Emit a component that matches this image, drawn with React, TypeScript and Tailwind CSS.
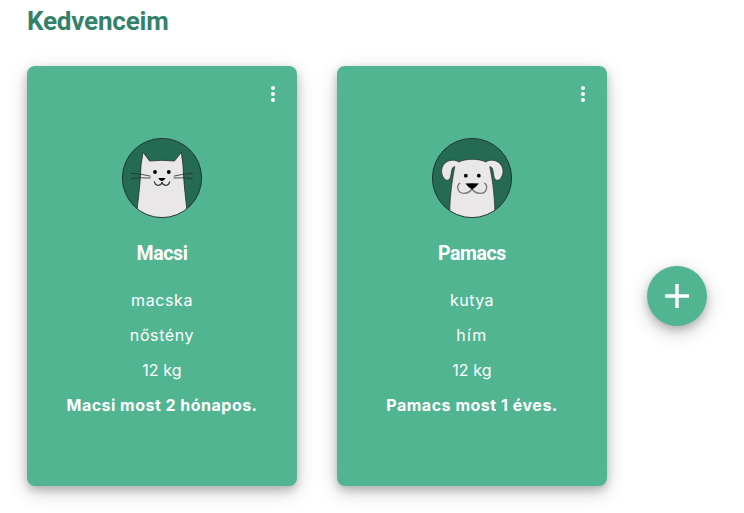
import React from "react";

function CatAvatar() {
  return (
    <svg viewBox="0 0 80 80" className="size-20">
      <defs>
        <clipPath id="cat-clip">
          <circle cx="40" cy="40" r="39.6" />
        </clipPath>
      </defs>
      <circle cx="40" cy="40" r="39.6" fill="#256b53" />
      <g clipPath="url(#cat-clip)" fill="none" stroke="#222b28" strokeWidth="0.8">
        <path
          d="M14 82 C16 62 18.5 45 19 27 L21 14.3 L27.6 23 Q40 21.6 52.5 23 L59.3 14.3 L61 27 C61.5 45 64 62 66 82 Z"
          fill="#e9e7e8"
        />
        <path d="M9 35.4 Q19 35.7 28.7 38.2 M9 40.6 Q19 39.3 28.7 40 M70.8 35.4 Q61 35.7 51.7 38.2 M70.8 40.6 Q61 39.3 51.7 40" />
        <path d="M32.4 43.4 C33 48.5 39 48.5 40 44.2 C41 48.5 47 48.5 47.6 43.4" strokeWidth="1.1" />
      </g>
      <circle cx="33" cy="34" r="1.9" fill="#000" />
      <circle cx="46.8" cy="34" r="1.9" fill="#000" />
      <path d="M36.3 40 H43.5 Q42.5 42.5 39.9 43.3 Q37.3 42.5 36.3 40Z" fill="#000" />
      <circle cx="40" cy="40" r="39.6" fill="none" stroke="#202b27" strokeWidth="0.9" />
    </svg>
  );
}

function DogAvatar() {
  return (
    <svg viewBox="0 0 80 80" className="size-20">
      <defs>
        <clipPath id="dog-clip">
          <circle cx="40" cy="40" r="39.6" />
        </clipPath>
      </defs>
      <circle cx="40" cy="40" r="39.6" fill="#256b53" />
      <g clipPath="url(#dog-clip)" fill="#e9e7e8" stroke="#222b28" strokeWidth="0.7">
        <path d="M17.6 82 C17.5 62 19.5 45 22.8 28.6 C18.8 29.2 20 35 18.2 40 C16.5 44 12 42.5 10.2 37 C7.6 29.5 13 22.2 20.5 22.2 C23 22.2 25 22.8 26.8 24 C34 20.4 47 20.4 53.8 24 C55.6 22.8 57.6 22.2 60 22.2 C67.4 22.2 73 29.5 70.4 37 C68.6 42.5 64.2 44 62.4 40 C60.7 35 61.8 29.2 57.8 28.6 C61.2 45 63 62 63 82 Z" />
      </g>
      <path
        d="M28.2 45.2 C24.3 47 24.8 55.4 32 55.4 Q37 55.2 40 51 Q43 55.2 48.2 55.4 C55.4 55.4 56.2 47 52.2 45.2"
        fill="none"
        stroke="#777777"
        strokeWidth="1.3"
      />
      <circle cx="33.8" cy="37.7" r="1.9" fill="#000" />
      <circle cx="46.8" cy="37.7" r="1.9" fill="#000" />
      <path d="M33.4 45.6 Q40 44.9 46.9 45.6 Q44 49.4 40.1 51.4 Q36 49.4 33.4 45.6Z" fill="#000" />
      <circle cx="40" cy="40" r="39.6" fill="none" stroke="#202b27" strokeWidth="0.9" />
    </svg>
  );
}

interface Line {
  text: string;
  className: string;
}

interface PetCardProps {
  name: string;
  avatar: React.ReactNode;
  lines: Line[];
}

function PetCard({ name, avatar, lines }: PetCardProps) {
  return (
    <article className="flex h-[420px] w-[270px] flex-col items-center rounded-lg bg-[#51b592] text-white shadow-[0_4px_8px_0_rgba(0,0,0,0.2),0_6px_20px_0_rgba(0,0,0,0.19)]">
      <div className="flex h-[72px] w-full justify-end pt-4 pr-3">
        <button aria-label="Menü" className="size-6">
          <svg viewBox="0 0 24 24" className="size-6" fill="currentColor">
            <circle cx="12" cy="6" r="2" />
            <circle cx="12" cy="12" r="2" />
            <circle cx="12" cy="18" r="2" />
          </svg>
        </button>
      </div>
      {avatar}
      <h2 className="mt-[22px] mb-[15px] font-['Roboto',sans-serif] text-[19.5px] leading-[28px] font-bold tracking-[-0.4px]">{name}</h2>
      {lines.map((line) => (
        <p key={line.text} className={`h-[35px] font-['Inter',sans-serif] text-[16px] leading-[35px] whitespace-nowrap ${line.className}`}>
          {line.text}
        </p>
      ))}
    </article>
  );
}

export default function App() {
  return (
    <main className="h-[513px] overflow-hidden bg-white pl-[27px]">
      <h1 className="h-[66px] pt-[3px] font-['Roboto',sans-serif] text-[26px] leading-[36px] font-bold tracking-[-0.2px] text-[#34816a]">Kedvenceim</h1>
      <div className="flex items-center gap-10">
        <PetCard
          name="Macsi"
          avatar={<CatAvatar />}
          lines={[
            { text: "macska", className: "tracking-[0.6px]" },
            { text: "nőstény", className: "tracking-[0.6px]" },
            { text: "12 kg", className: "tracking-[0.1px]" },
            { text: "Macsi most 2 hónapos.", className: "font-bold tracking-[0.48px]" },
          ]}
        />
        <PetCard
          name="Pamacs"
          avatar={<DogAvatar />}
          lines={[
            { text: "kutya", className: "tracking-[0.5px]" },
            { text: "hím", className: "tracking-[1.4px]" },
            { text: "12 kg", className: "tracking-[0.1px]" },
            { text: "Pamacs most 1 éves.", className: "font-bold tracking-[0.52px]" },
          ]}
        />
        <button
          aria-label="Új kedvenc"
          className="mt-10 flex size-[60px] items-center justify-center rounded-full bg-[#51b592] text-white shadow-[0_4px_8px_0_rgba(0,0,0,0.2),0_6px_20px_0_rgba(0,0,0,0.19)]"
        >
          <svg viewBox="0 0 24 24" className="size-6" fill="none" stroke="currentColor" strokeWidth="3.4">
            <path d="M12 0V24M0 12H24" />
          </svg>
        </button>
      </div>
    </main>
  );
}
